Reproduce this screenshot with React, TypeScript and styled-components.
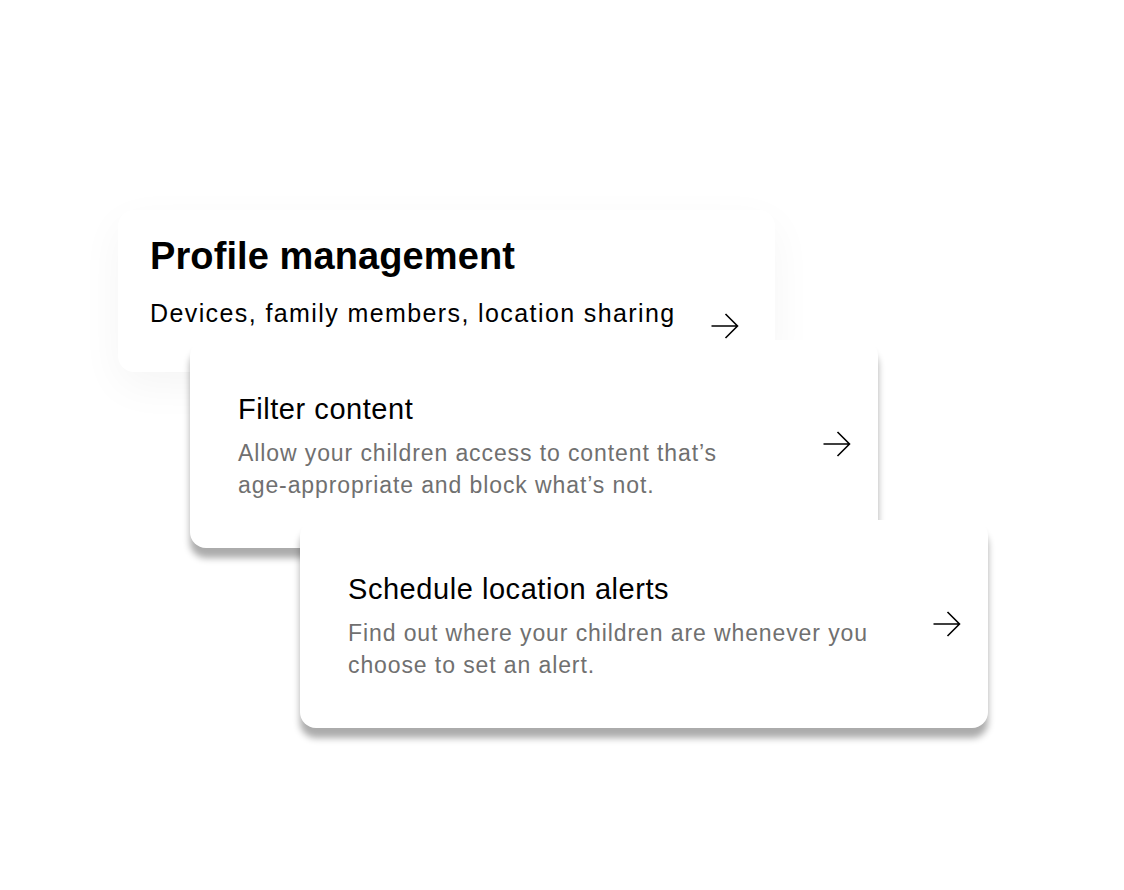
import React from "react";
import styled, { createGlobalStyle } from "styled-components";

const Global = createGlobalStyle`
  html, body { margin: 0; padding: 0; background: #ffffff; }
  body { font-family: "Liberation Sans", Arial, sans-serif; color: #000; }
`;

const Stage = styled.main`
  width: 1124px;
  height: 890px;
  box-sizing: border-box;
  padding: 210px 0 0 118px;
  display: flex;
  flex-direction: column;
  align-items: flex-start;
`;

const HeroCard = styled.section`
  position: relative;
  width: 657px;
  box-sizing: border-box;
  padding: 24px 36px 33px 32px;
  background: #fff;
  border-radius: 16px;
  box-shadow: 0 14px 44px rgba(0, 0, 0, 0.045);
  display: flex;
  align-items: flex-end;
  justify-content: space-between;
`;

const HeroText = styled.div`
  display: flex;
  flex-direction: column;
  gap: 19px;
  padding-bottom: 10px;
`;

const HeroTitle = styled.h1`
  margin: 0;
  font-size: 38px;
  line-height: 44px;
  font-weight: 700;
  letter-spacing: 0.1px;
`;

const HeroSub = styled.p`
  margin: 0;
  font-size: 25px;
  line-height: 32px;
  letter-spacing: 1.4px;
`;

const Card = styled.section<{ $indent: number; $overlap: number }>`
  position: relative;
  margin-left: ${(p) => p.$indent}px;
  margin-top: -${(p) => p.$overlap}px;
  width: 688px;
  height: 208px;
  box-sizing: border-box;
  padding: 0 27px 0 48px;
  background: #fff;
  border-radius: 16px;
  box-shadow: 0 10px 7px rgba(0, 0, 0, 0.33);
  display: flex;
  align-items: center;
  justify-content: space-between;
`;

const CardText = styled.div`
  display: flex;
  flex-direction: column;
  gap: 10px;
  padding-top: 4px;
  max-width: 524px;
`;

const CardTitle = styled.h2`
  margin: 0;
  font-size: 29px;
  line-height: 36px;
  font-weight: 400;
  letter-spacing: 0.55px;
`;

const CardBody = styled.p`
  margin: 0;
  font-size: 23px;
  line-height: 32px;
  color: #707070;
  letter-spacing: 0.9px;
`;

const ArrowSvg = styled.svg`
  flex: none;
  display: block;
`;

const Arrow = () => (
  <ArrowSvg width="28" height="26" viewBox="0 0 28 26" fill="none">
    <path d="M0.5 13H26.5M14.5 1L26.5 13L14.5 25" stroke="#000" strokeWidth="1.6" />
  </ArrowSvg>
);

const cards = [
  {
    title: "Filter content",
    body: "Allow your children access to content that’s age-appropriate and block what’s not.",
    indent: 72,
    overlap: 32,
  },
  {
    title: "Schedule location alerts",
    body: "Find out where your children are whenever you choose to set an alert.",
    indent: 182,
    overlap: 28,
  },
];

export default function App() {
  return (
    <>
      <Global />
      <Stage>
        <HeroCard>
          <HeroText>
            <HeroTitle>Profile management</HeroTitle>
            <HeroSub>Devices, family members, location sharing</HeroSub>
          </HeroText>
          <Arrow />
        </HeroCard>
        {cards.map((c) => (
          <Card key={c.title} $indent={c.indent} $overlap={c.overlap}>
            <CardText>
              <CardTitle>{c.title}</CardTitle>
              <CardBody>{c.body}</CardBody>
            </CardText>
            <Arrow />
          </Card>
        ))}
      </Stage>
    </>
  );
}
